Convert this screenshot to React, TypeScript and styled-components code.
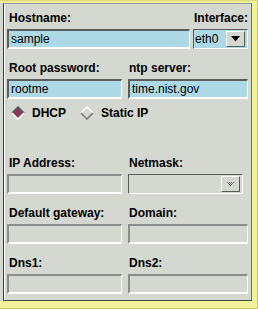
import React from "react"
import styled, { createGlobalStyle } from "styled-components"

const GlobalStyle = createGlobalStyle`
  html, body {
    margin: 0;
    padding: 0;
    background: #d5d7d1;
  }
  body {
    font-family: "Liberation Sans", Arial, sans-serif;
  }
`

const Screen = styled.div`
  width: 258px;
  height: 309px;
  box-sizing: border-box;
  padding: 2px 5px 7px 0;
  background: #f2f29a;
  border-top: 1px solid #d8d870;
  border-bottom: 1px solid #c9c95c;
  border-right: 1px solid #c9c95c;
  display: flex;
`

const Panel = styled.div`
  flex: 1;
  display: flex;
  padding-left: 3px;
  background: #d5d7d1;
`

const Frame = styled.div`
  flex: 1;
  box-sizing: border-box;
  padding: 7px 3px 0 3px;
  border-left: 1px solid #3c3c3c;
  border-right: 1px solid #6e6e6e;
  border-bottom: 1px solid #4a4a4a;
  border-top: 1px solid #9a9a9a;
  box-shadow: inset 1px 0 0 #ffffff;
  background: #d5d7d1;
`

const Grid = styled.div`
  display: grid;
  grid-template-columns: 115px 1fr;
  column-gap: 6px;
`

const Field = styled.div<{ $span?: boolean }>`
  display: flex;
  flex-direction: column;
  align-items: flex-start;
  gap: 4px;
  grid-column: ${({ $span }) => ($span ? "1 / span 2" : "auto")};
  margin-bottom: 12px;
`

const LabelRow = styled.div`
  align-self: stretch;
  display: flex;
  justify-content: space-between;
`

const Label = styled.span<{ $indent?: number }>`
  font-size: 12px;
  line-height: 14px;
  font-weight: bold;
  color: #000;
  padding-left: ${({ $indent }) => $indent ?? 2}px;
`

const InputRow = styled.div`
  align-self: stretch;
  display: flex;
  gap: 3px;
`

const Entry = styled.div<{ $enabled?: boolean; $grow?: boolean }>`
  box-sizing: border-box;
  height: 20px;
  ${({ $grow }) => ($grow ? "flex: 1;" : "align-self: stretch;")}
  padding: 1px 2px 0;
  border-style: solid;
  border-width: 2px 1px 2px 2px;
  border-color: ${({ $enabled }) =>
    $enabled ? "#5c5c5c #ffffff #ffffff #5c5c5c" : "#8c8c8c #ffffff #ffffff #8c8c8c"};
  background: ${({ $enabled }) => ($enabled ? "#add8e6" : "#d5d7d1")};
  font-size: 12px;
  line-height: 15px;
  color: #000;
  white-space: nowrap;
  overflow: hidden;
`

const Combo = styled.div<{ $enabled?: boolean; $width?: number }>`
  box-sizing: border-box;
  height: 20px;
  width: ${({ $width }) => $width ?? 55}px;
  flex: none;
  display: flex;
  align-items: center;
  padding: 1px;
  border-style: solid;
  border-width: 1px;
  border-color: #5c5c5c #ffffff #ffffff #5c5c5c;
  background: ${({ $enabled }) => ($enabled ? "#add8e6" : "#d5d7d1")};
  font-size: 12px;
  line-height: 15px;
`

const ComboText = styled.span`
  flex: 1;
  color: #000;
`

const ComboButton = styled.div`
  box-sizing: border-box;
  width: 19px;
  height: 16px;
  margin-right: 1px;
  display: flex;
  align-items: center;
  justify-content: center;
  background: #d5d7d1;
  border-style: solid;
  border-width: 1px;
  border-color: #ffffff #5a5a5a #5a5a5a #ffffff;
`

const RadioRow = styled.div`
  grid-column: 1 / span 2;
  display: flex;
  align-items: center;
  height: 16px;
  margin: -6px 0 35px 4px;
`

const RadioItem = styled.div`
  display: flex;
  align-items: center;
  gap: 7px;
  margin-right: 14px;
`

const RadioText = styled.span`
  font-size: 12px;
  line-height: 14px;
  font-weight: bold;
  color: #000;
`

const Diamond = ({ checked }: { checked?: boolean }) => (
  <svg width="14" height="14" viewBox="0 0 14 14">
    <polygon
      points="7,1 13,7 7,13 1,7"
      fill={checked ? "#8e3656" : "#d5d7d1"}
    />
    <polyline
      points="1,7 7,1 13,7"
      fill="none"
      stroke={checked ? "#5a5a5a" : "#ffffff"}
      strokeWidth="1.6"
    />
    <polyline
      points="1,7 7,13 13,7"
      fill="none"
      stroke={checked ? "#ffffff" : "#7a7a7a"}
      strokeWidth="1.6"
    />
  </svg>
)

const ArrowDown = () => (
  <svg width="9" height="6" viewBox="0 0 9 6">
    <polygon points="0,0 9,0 4.5,5.5" fill="#000" />
  </svg>
)

const DottedArrow = () => (
  <svg width="7" height="4" viewBox="0 0 7 4" shapeRendering="crispEdges">
    {[
      [0, 0], [2, 0], [4, 0], [6, 0],
      [1, 1], [3, 1], [5, 1],
      [2, 2], [4, 2],
      [3, 3],
    ].map(([x, y]) => (
      <rect key={`${x}-${y}`} x={x} y={y} width="1" height="1" fill="#6a6a6a" />
    ))}
  </svg>
)

export default function App() {
  return (
    <>
      <GlobalStyle />
      <Screen>
        <Panel>
          <Frame>
            <Grid>
              <Field $span>
                <LabelRow>
                  <Label>Hostname:</Label>
                  <Label>Interface:</Label>
                </LabelRow>
                <InputRow>
                  <Entry $enabled $grow>sample</Entry>
                  <Combo $enabled>
                    <ComboText>eth0</ComboText>
                    <ComboButton>
                      <ArrowDown />
                    </ComboButton>
                  </Combo>
                </InputRow>
              </Field>

              <Field>
                <Label>Root password:</Label>
                <Entry $enabled>rootme</Entry>
              </Field>
              <Field>
                <Label $indent={1}>ntp server:</Label>
                <Entry $enabled>time.nist.gov</Entry>
              </Field>

              <RadioRow>
                <RadioItem>
                  <Diamond checked />
                  <RadioText>DHCP</RadioText>
                </RadioItem>
                <RadioItem>
                  <Diamond />
                  <RadioText>Static IP</RadioText>
                </RadioItem>
              </RadioRow>

              <Field>
                <Label>IP Address:</Label>
                <Entry />
              </Field>
              <Field>
                <Label $indent={1}>Netmask:</Label>
                <Combo $width={115}>
                  <ComboText />
                  <ComboButton>
                    <DottedArrow />
                  </ComboButton>
                </Combo>
              </Field>

              <Field>
                <Label>Default gateway:</Label>
                <Entry />
              </Field>
              <Field>
                <Label $indent={1}>Domain:</Label>
                <Entry />
              </Field>

              <Field>
                <Label>Dns1:</Label>
                <Entry />
              </Field>
              <Field>
                <Label $indent={1}>Dns2:</Label>
                <Entry />
              </Field>
            </Grid>
          </Frame>
        </Panel>
      </Screen>
    </>
  )
}
